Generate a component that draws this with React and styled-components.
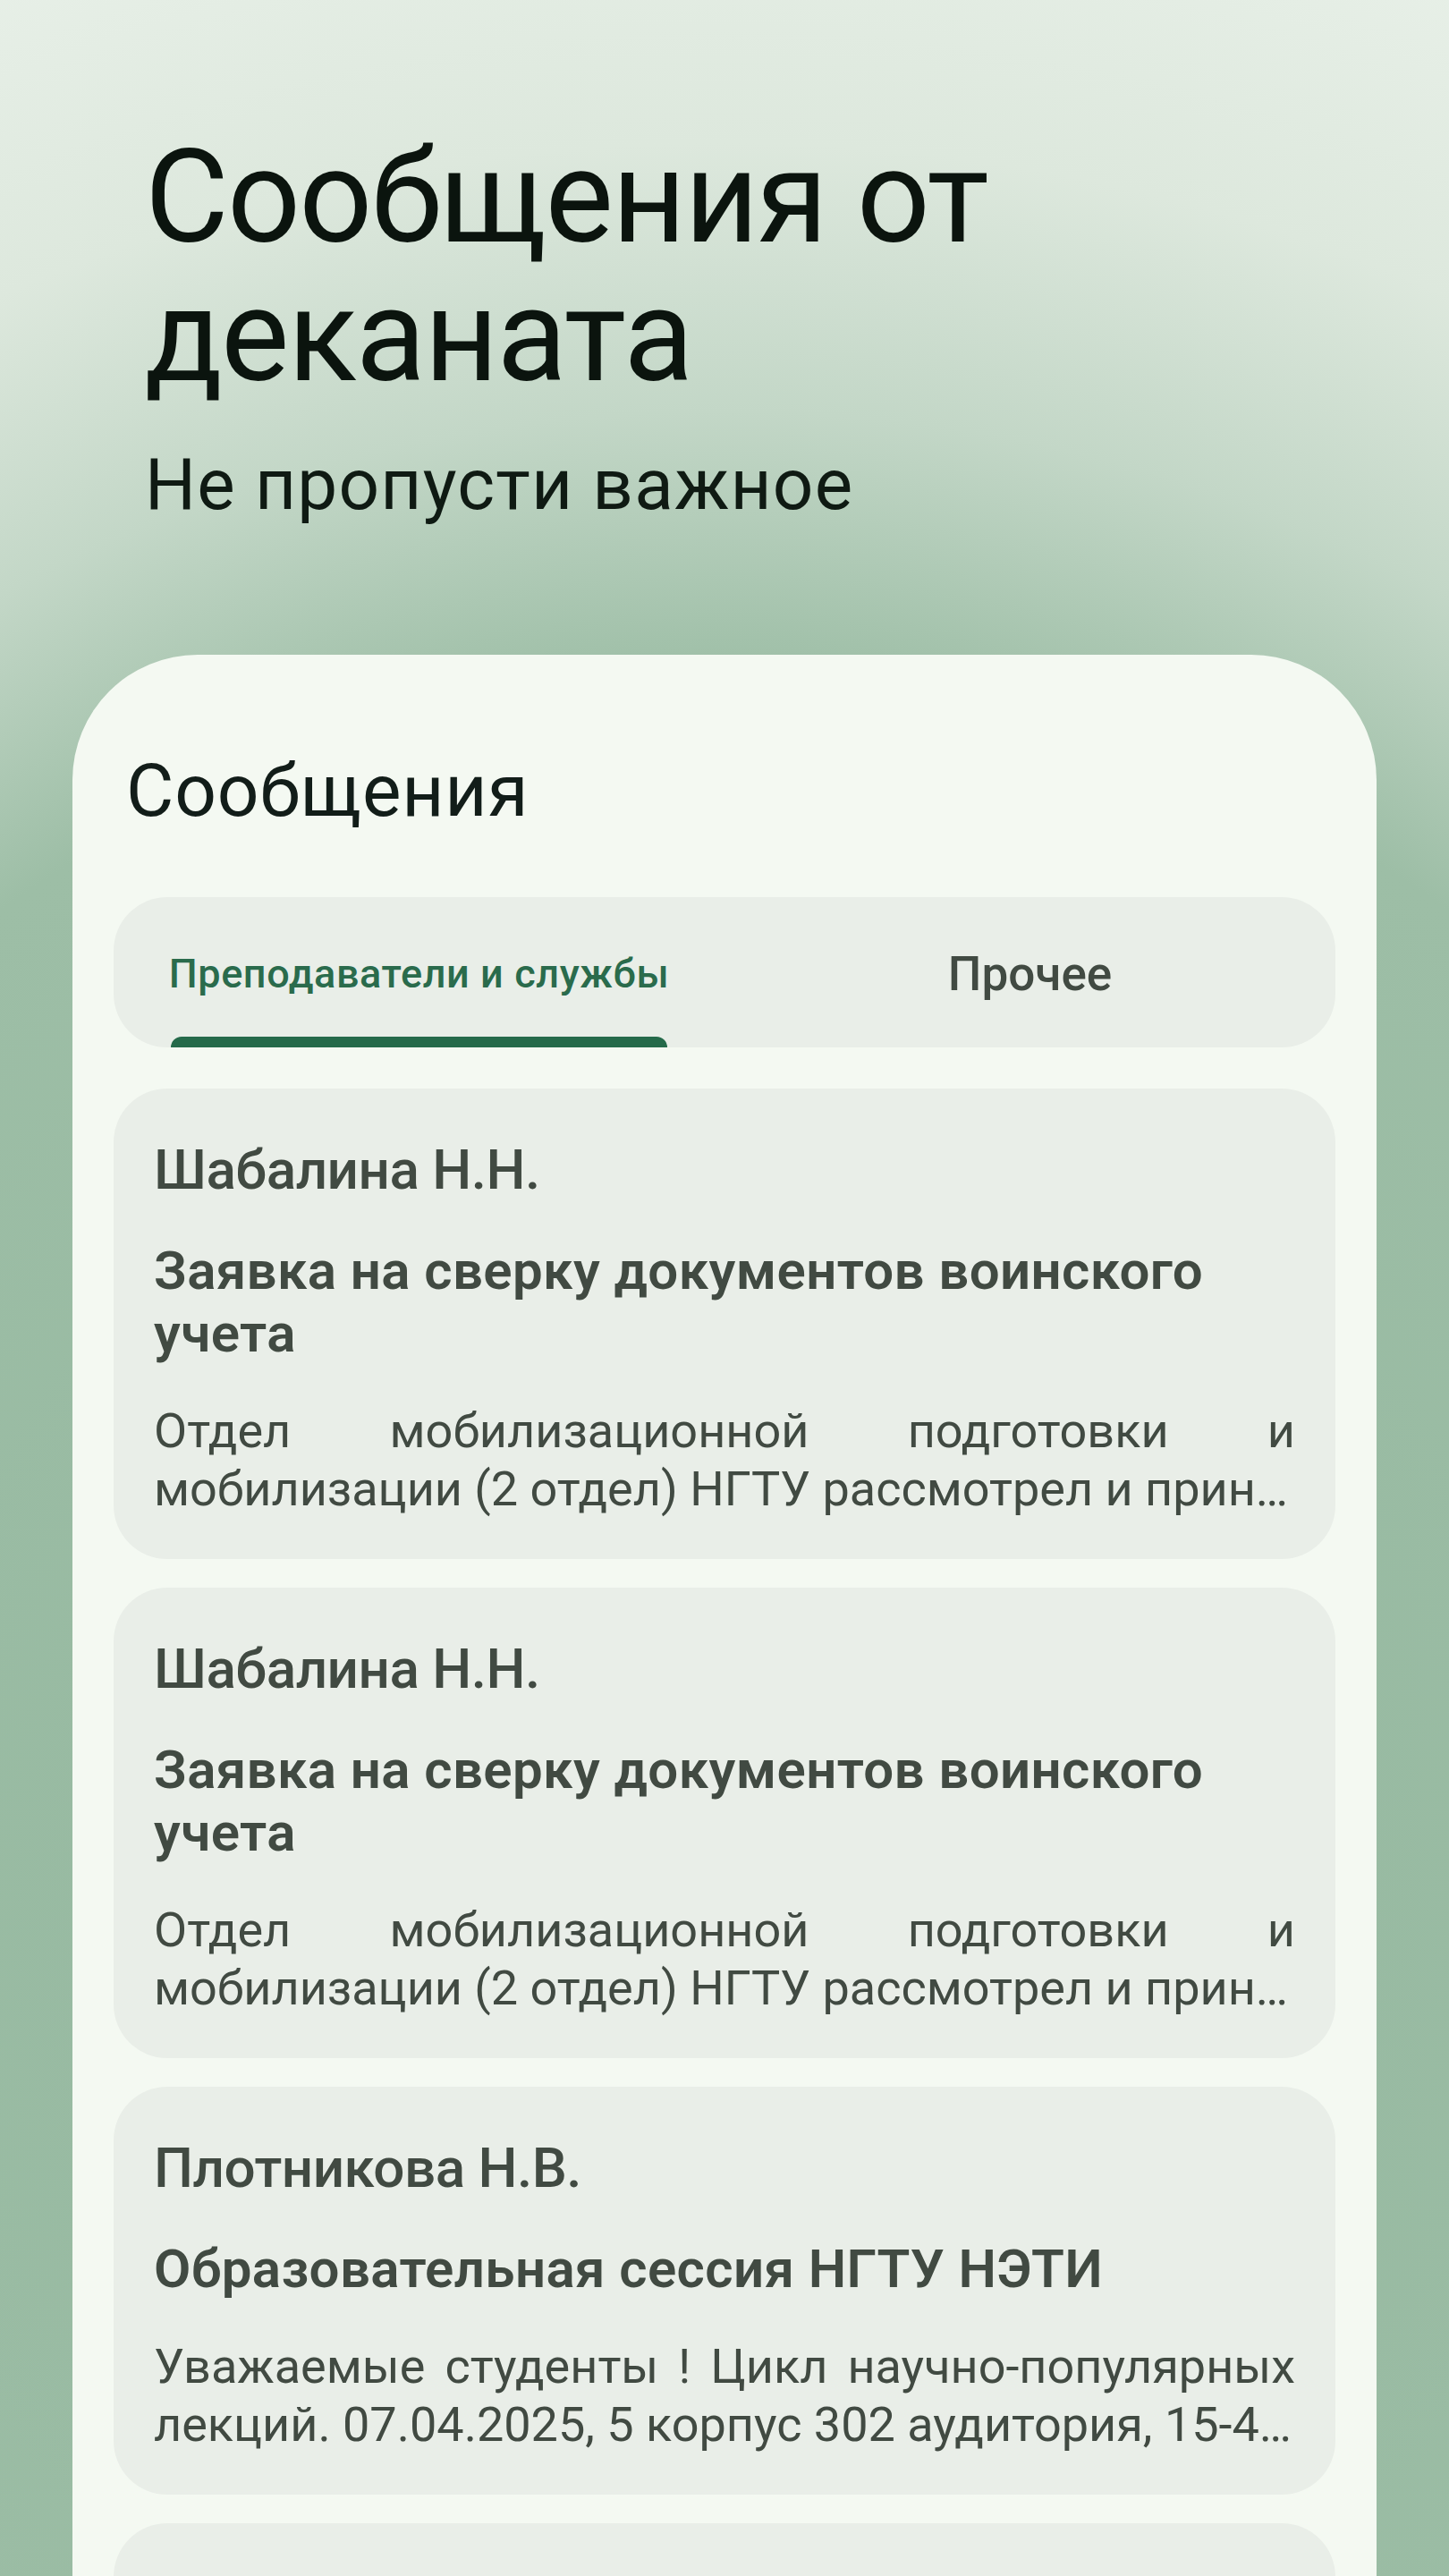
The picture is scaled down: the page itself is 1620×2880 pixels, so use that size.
import React from 'react';
import styled, { createGlobalStyle } from 'styled-components';

const GlobalStyle = createGlobalStyle`
  html, body { margin: 0; padding: 0; }
  body { font-family: Roboto, "Noto Sans", "Liberation Sans", sans-serif; }
  *, *::before, *::after { box-sizing: border-box; }
`;

const Page = styled.div`
  width: 1620px;
  height: 2880px;
  overflow: hidden;
  display: flex;
  flex-direction: column;
  background: radial-gradient(
    circle at 50% 75%,
    #93b79e 0px,
    #9dbea6 1400px,
    #c3d7c7 1700px,
    #dde8dd 2000px,
    #e8f0e8 2350px
  );
`;

const Header = styled.header`
  display: flex;
  flex-direction: column;
  padding: 143px 0 0 162px;
`;

const Heading = styled.h1`
  margin: 0;
  max-width: 1200px;
  font-size: 144px;
  line-height: 155px;
  font-weight: 400;
  letter-spacing: -1.8px;
  color: #0b140e;
`;

const Subtitle = styled.p`
  margin: 42px 0 0;
  font-size: 80px;
  line-height: 94px;
  font-weight: 400;
  letter-spacing: 1.2px;
  color: #0f1a13;
`;

const Panel = styled.section`
  flex: 1;
  margin: 143px 81px 0;
  padding: 104px 46px 0;
  border-radius: 140px 140px 0 0;
  background: #f4f9f2;
  display: flex;
  flex-direction: column;
`;

const PanelTitle = styled.h2`
  margin: 0;
  padding-left: 14px;
  font-size: 82px;
  line-height: 96px;
  font-weight: 400;
  letter-spacing: 0.8px;
  color: #121d19;
`;

const Tabs = styled.div`
  margin-top: 71px;
  height: 168px;
  border-radius: 60px;
  background: #e9eee8;
  display: grid;
  grid-template-columns: 1fr 1fr;
  overflow: hidden;
`;

const Tab = styled.div`
  display: flex;
  justify-content: center;
  height: 100%;
`;

const TabInner = styled.div`
  position: relative;
  height: 100%;
  display: flex;
  align-items: center;
  padding-top: ${p => p.$offset}px;
`;

const TabLabel = styled.span`
  font-size: ${p => p.$size}px;
  line-height: ${p => Math.round(p.$size * 1.18)}px;
  font-weight: 500;
  letter-spacing: ${p => p.$tracking}px;
  color: ${p => (p.$active ? '#2a6b4c' : '#414a42')};
  white-space: nowrap;
`;

const Indicator = styled.span`
  position: absolute;
  left: 2px;
  right: 2px;
  bottom: 0;
  height: 12px;
  border-radius: 12px 12px 0 0;
  background: #256a4a;
`;

const List = styled.div`
  margin-top: 46px;
  display: flex;
  flex-direction: column;
  gap: 32px;
`;

const Card = styled.article`
  background: #e9eee8;
  border-radius: 60px;
  padding: 55px 45px 46px;
  color: #414a42;
`;

const Author = styled.div`
  font-size: 62px;
  line-height: 72px;
  font-weight: 500;
  letter-spacing: -0.5px;
`;

const Subject = styled.div`
  margin-top: 42px;
  font-size: 60px;
  line-height: 70px;
  font-weight: 600;
  letter-spacing: 0.4px;
`;

const Preview = styled.p`
  margin: 41px 0 0;
  font-size: 54px;
  line-height: 65px;
  font-weight: 400;
  letter-spacing: 0;
  text-align: justify;
  display: -webkit-box;
  -webkit-box-orient: vertical;
  -webkit-line-clamp: 2;
  overflow: hidden;
`;

const messages = [
  {
    author: 'Шабалина Н.Н.',
    subject: 'Заявка на сверку документов воинского учета',
    text: 'Отдел мобилизационной подготовки и мобилизации (2 отдел) НГТУ рассмотрел и прин…',
  },
  {
    author: 'Шабалина Н.Н.',
    subject: 'Заявка на сверку документов воинского учета',
    text: 'Отдел мобилизационной подготовки и мобилизации (2 отдел) НГТУ рассмотрел и прин…',
  },
  {
    author: 'Плотникова Н.В.',
    subject: 'Образовательная сессия НГТУ НЭТИ',
    text: 'Уважаемые студенты ! Цикл научно-популярных лекций. 07.04.2025, 5 корпус 302 аудитория, 15-4…',
  },
  {
    author: 'Шабалина Н.Н.',
    subject: 'Заявка на сверку документов воинского учета',
    text: 'Отдел мобилизационной подготовки и мобилизации (2 отдел) НГТУ рассмотрел и прин…',
  },
];

export default function App() {
  return (
    <>
      <GlobalStyle />
      <Page>
        <Header>
          <Heading>Сообщения от деканата</Heading>
          <Subtitle>Не пропусти важное</Subtitle>
        </Header>
        <Panel>
          <PanelTitle>Сообщения</PanelTitle>
          <Tabs>
            <Tab>
              <TabInner $offset={2}>
                <TabLabel $size={45} $tracking={0.6} $active>Преподаватели и службы</TabLabel>
                <Indicator />
              </TabInner>
            </Tab>
            <Tab>
              <TabInner $offset={4}>
                <TabLabel $size={53} $tracking={0}>Прочее</TabLabel>
              </TabInner>
            </Tab>
          </Tabs>
          <List>
            {messages.map((m, i) => (
              <Card key={i}>
                <Author>{m.author}</Author>
                <Subject>{m.subject}</Subject>
                <Preview>{m.text}</Preview>
              </Card>
            ))}
          </List>
        </Panel>
      </Page>
    </>
  );
}
